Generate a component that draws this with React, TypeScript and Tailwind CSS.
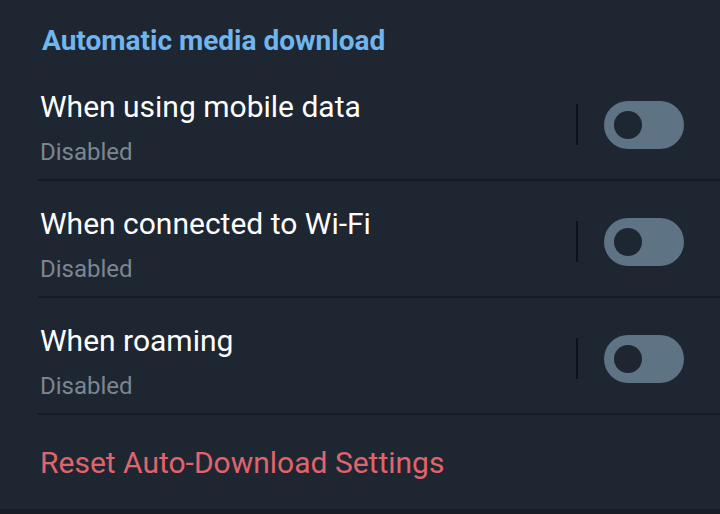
const rows = [
  { title: 'When using mobile data', status: 'Disabled' },
  { title: 'When connected to Wi-Fi', status: 'Disabled' },
  { title: 'When roaming', status: 'Disabled' },
]

function Toggle() {
  return (
    <div className="flex items-center">
      <div className="w-[2px] h-[41px] bg-[#0e1319]" />
      <div className="ml-[26px] w-[80px] h-[48px] rounded-full bg-[#5e7384] flex items-center pl-[10px]">
        <div className="w-[28px] h-[28px] rounded-full bg-[#1e2632]" />
      </div>
    </div>
  )
}

export default function App() {
  return (
    <div className="w-[720px] h-[514px] bg-[#1e2632] flex flex-col overflow-hidden" style={{ fontFamily: 'Roboto, "Noto Sans", sans-serif' }}>
      <div className="pt-[25px] pl-[42px] h-[64px]">
        <h2 className="text-[28px] leading-[32px] font-bold text-[#70b5ee]">Automatic media download</h2>
      </div>

      {rows.map(r => (
        <div key={r.title}>
          <div className="flex items-center justify-between h-[115px] pl-[40px] pr-[36px]">
            <div className="self-start pt-[26px]">
              <div className="text-[30px] leading-[34px] text-white">{r.title}</div>
              <div className="mt-[14px] text-[24px] leading-[28px] text-[#7c8691]">{r.status}</div>
            </div>
            <div className="mt-[6px]">
              <Toggle />
            </div>
          </div>
          <div className="ml-[38px] h-[2px] bg-[#161c24]" />
        </div>
      ))}

      <div className="flex-1 flex items-center pl-[40px] pt-[2px]">
        <button className="text-[30px] leading-[34px] text-[#e0646c]">Reset Auto-Download Settings</button>
      </div>
      <div className="h-[5px] bg-[#181d25]" />
    </div>
  )
}
